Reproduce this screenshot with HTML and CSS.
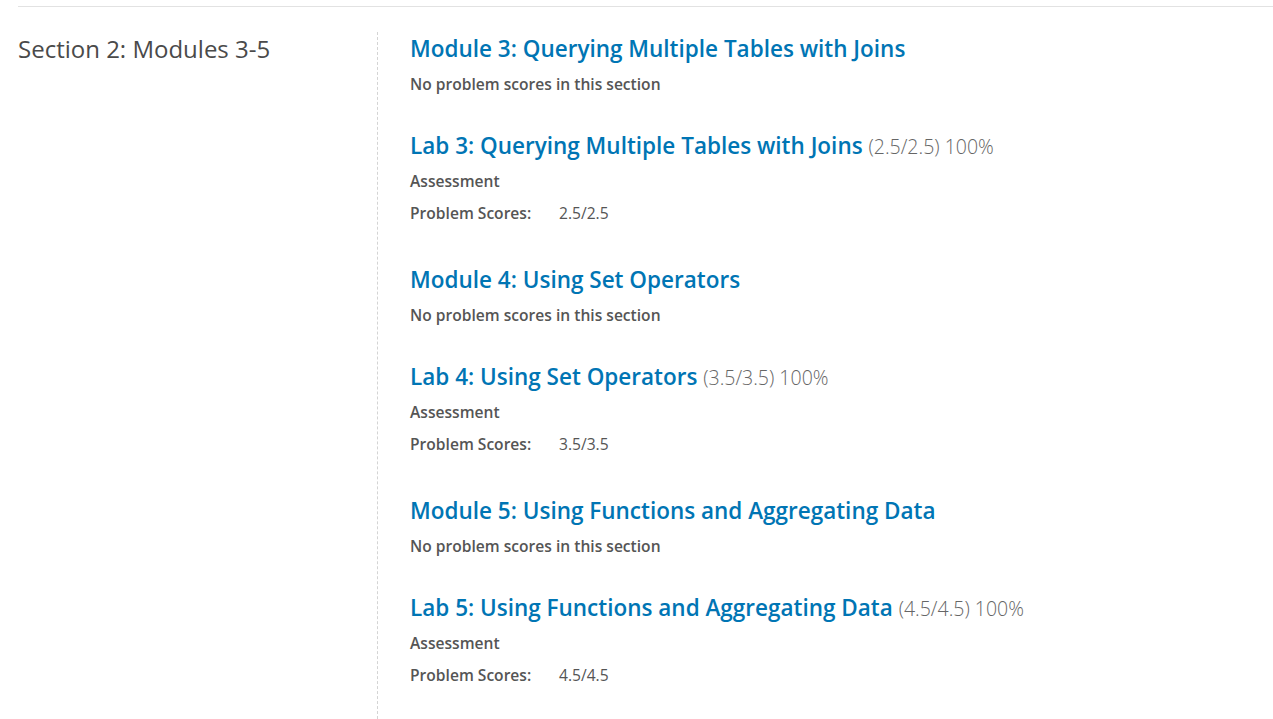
FILE: index.html
```html
<!DOCTYPE html>
<html>
<head>
<meta charset="utf-8">
<link rel="stylesheet" href="styles.css">
</head>
<body>
<div class="page">
  <section class="chapter">
    <h2 class="chapter-title">Section 2: Modules 3-5</h2>
    <div class="sections">
      <div class="item">
        <h3 class="item-title"><a href="#">Module 3: Querying Multiple Tables with Joins</a></h3>
        <p class="note">No problem scores in this section</p>
      </div>
      <div class="item item-lab">
        <h3 class="item-title"><a href="#">Lab 3: Querying Multiple Tables with Joins</a> <span class="score">(2.5/2.5) 100%</span></h3>
        <p class="note">Assessment</p>
        <div class="scores"><span class="label">Problem Scores:</span><span class="value">2.5/2.5</span></div>
      </div>
      <div class="item">
        <h3 class="item-title"><a href="#">Module 4: Using Set Operators</a></h3>
        <p class="note">No problem scores in this section</p>
      </div>
      <div class="item item-lab">
        <h3 class="item-title"><a href="#">Lab 4: Using Set Operators</a> <span class="score">(3.5/3.5) 100%</span></h3>
        <p class="note">Assessment</p>
        <div class="scores"><span class="label">Problem Scores:</span><span class="value">3.5/3.5</span></div>
      </div>
      <div class="item">
        <h3 class="item-title"><a href="#">Module 5: Using Functions and Aggregating Data</a></h3>
        <p class="note">No problem scores in this section</p>
      </div>
      <div class="item item-lab">
        <h3 class="item-title"><a href="#">Lab 5: Using Functions and Aggregating Data</a> <span class="score">(4.5/4.5) 100%</span></h3>
        <p class="note">Assessment</p>
        <div class="scores"><span class="label">Problem Scores:</span><span class="value">4.5/4.5</span></div>
      </div>
    </div>
  </section>
</div>
</body>
</html>
```
FILE: styles.css
```css
html, body {
  margin: 0;
  padding: 0;
  background: #fff;
}
body {
  font-family: "Open Sans", "Liberation Sans", sans-serif;
  color: #4a4a4a;
}
.page {
  padding: 6px 0 0 18px;
}
.chapter {
  display: flex;
  border-top: 1px solid #e2e2e2;
  padding-top: 25px;
}
.chapter-title {
  width: 359px;
  flex: none;
  margin: 0;
  font-size: 24px;
  font-weight: 400;
  line-height: 30px;
  color: #4a4a4a;
  padding-top: 2px;
}
.sections {
  flex: 1;
  border-left: 1px dashed #d4d4d4;
  padding-left: 32px;
  padding-top: 2px;
  min-height: 700px;
}
.item {
  margin-bottom: 37px;
}
.item-lab {
  margin-bottom: 42px;
}
.item-title {
  margin: 0 0 10px;
  font-size: 22.5px;
  font-weight: 600;
  line-height: 30px;
}
.item-lab .item-title {
  margin-bottom: 9px;
}
.item-title a {
  color: #0075b4;
  text-decoration: none;
}
.score {
  font-size: 19.5px;
  font-weight: 300;
  color: #666;
}
.note {
  margin: 0;
  font-size: 15.6px;
  font-weight: 600;
  line-height: 20px;
  color: #555;
}
.scores {
  margin-top: 12px;
  display: flex;
  font-size: 15.6px;
  line-height: 20px;
  color: #555;
}
.label {
  font-weight: 600;
  width: 149px;
}
.value {
  font-weight: 400;
}
```
